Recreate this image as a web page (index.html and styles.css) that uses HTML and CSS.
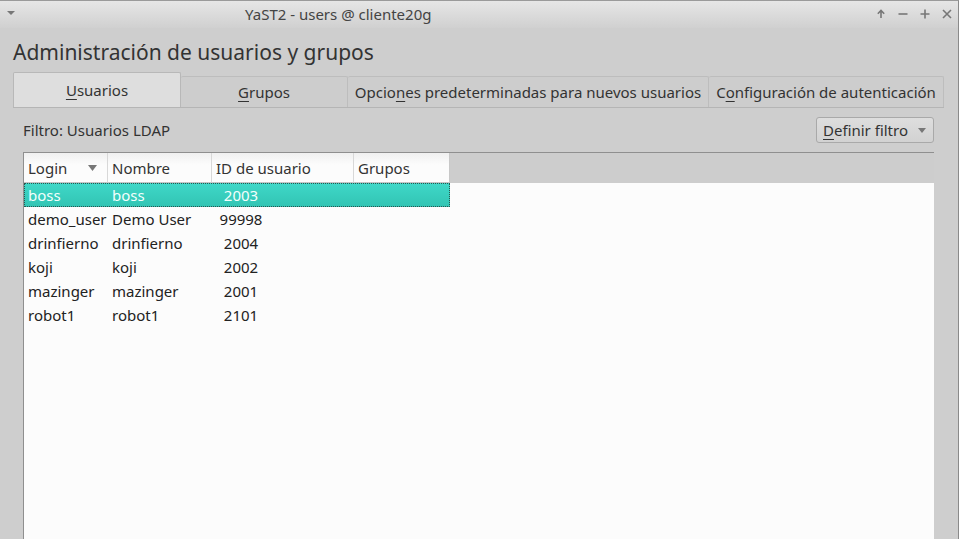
FILE: index.html
```html
<!DOCTYPE html>
<html lang="es">
<head>
<meta charset="utf-8">
<title>YaST2 - users @ cliente20g</title>
<link rel="stylesheet" href="styles.css">
</head>
<body>
<div class="window">
  <div class="titlebar">
    <svg class="menu-arrow" width="8" height="6" viewBox="0 0 8 6"><path d="M0 1 L8 1 L4 5 Z" fill="#777"/></svg>
    <div class="wtitle">YaST2 - users @ cliente20g</div>
    <div class="wbuttons">
      <svg width="10" height="10" viewBox="0 0 10 10"><path d="M5 1.5 L5 9 M1.8 4.7 L5 1.5 L8.2 4.7" stroke="#777" stroke-width="1.6" fill="none"/></svg>
      <svg width="10" height="10" viewBox="0 0 10 10"><path d="M0.5 5 L9.5 5" stroke="#777" stroke-width="1.6"/></svg>
      <svg width="10" height="10" viewBox="0 0 10 10"><path d="M0.5 5 L9.5 5 M5 0.5 L5 9.5" stroke="#777" stroke-width="1.6"/></svg>
      <svg width="10" height="10" viewBox="0 0 10 10"><path d="M1 1 L9 9 M9 1 L1 9" stroke="#777" stroke-width="1.6"/></svg>
    </div>
  </div>
  <div class="content">
    <h1 class="heading">Administración de usuarios y grupos</h1>
    <div class="tabs">
      <div class="tab active w1"><span class="u">U</span>suarios</div>
      <div class="tab w2"><span class="u">G</span>rupos</div>
      <div class="tab w3">Opcio<span class="u">n</span>es predeterminadas para nuevos usuarios</div>
      <div class="tab w4">C<span class="u">o</span>nfiguración de autenticación</div>
    </div>
    <div class="panel">
      <div class="filter-row">
        <div class="filter-label">Filtro: Usuarios LDAP</div>
        <div class="btn"><span class="u">D</span>efinir filtro <svg class="btn-arrow" width="8" height="5" viewBox="0 0 8 5"><path d="M0 0 L8 0 L4 5 Z" fill="#777"/></svg></div>
      </div>
      <div class="table">
        <div class="thead">
          <div class="th c1">Login <svg class="sort" width="9" height="6" viewBox="0 0 9 6"><path d="M0 0 L9 0 L4.5 6 Z" fill="#777"/></svg></div>
          <div class="th c2">Nombre</div>
          <div class="th c3">ID de usuario</div>
          <div class="th c4">Grupos</div>
        </div>
        <div class="tbody">
          <div class="tr selected"><div class="td c1">boss</div><div class="td c2">boss</div><div class="td c3"><span class="num">2003</span></div><div class="td c4"></div></div>
          <div class="tr"><div class="td c1">demo_user</div><div class="td c2">Demo User</div><div class="td c3"><span class="num">99998</span></div><div class="td c4"></div></div>
          <div class="tr"><div class="td c1">drinfierno</div><div class="td c2">drinfierno</div><div class="td c3"><span class="num">2004</span></div><div class="td c4"></div></div>
          <div class="tr"><div class="td c1">koji</div><div class="td c2">koji</div><div class="td c3"><span class="num">2002</span></div><div class="td c4"></div></div>
          <div class="tr"><div class="td c1">mazinger</div><div class="td c2">mazinger</div><div class="td c3"><span class="num">2001</span></div><div class="td c4"></div></div>
          <div class="tr"><div class="td c1">robot1</div><div class="td c2">robot1</div><div class="td c3"><span class="num">2101</span></div><div class="td c4"></div></div>
        </div>
      </div>
    </div>
  </div>
</div>
</body>
</html>
```
FILE: styles.css
```css
html, body {
  margin: 0;
  padding: 0;
}
body {
  width: 959px;
  height: 539px;
  overflow: hidden;
  background: #cecece;
  font-family: "Noto Sans", "Open Sans", sans-serif;
  color: #333;
}
.window {
  height: 539px;
  box-sizing: border-box;
  border-top: 1px solid #9a9a9a;
  border-right: 1px solid #8a8a8a;
  display: flex;
  flex-direction: column;
}
.titlebar {
  height: 27px;
  flex: none;
  display: flex;
  align-items: center;
  background: linear-gradient(#e6e6e6, #d0d0d0);
}
.menu-arrow {
  margin-left: 7px;
  margin-top: -3px;
}
.wtitle {
  margin-left: 230px;
  font-size: 15px;
  color: #444;
  margin-top: -1px;
}
.wbuttons {
  margin-left: auto;
  display: flex;
  gap: 12px;
  margin-right: 6px;
  margin-top: -2px;
}
.content {
  flex: 1;
  display: flex;
  flex-direction: column;
  padding: 0 14px 0 13px;
  min-height: 0;
}
.heading {
  margin: 7px 0 0 0;
  font-size: 21px;
  font-weight: normal;
  color: #333;
  line-height: 34px;
  height: 36px;
}
.tabs {
  display: flex;
  align-items: flex-end;
  height: 36px;
  margin-top: 1px;
  box-sizing: border-box;
  border-bottom: 1px solid #b5b5b5;
}
.tab {
  height: 31px;
  box-sizing: border-box;
  display: flex;
  align-items: center;
  justify-content: center;
  font-size: 15px;
  color: #333;
  background: #cdcdcd;
  border: 1px solid #bdbdbd;
  border-bottom: none;
  border-left: none;
  border-radius: 2px 2px 0 0;
}
.tab.active {
  height: 35px;
  background: #dedede;
  border: 1px solid #b8b8b8;
  border-bottom: none;
  padding-bottom: 0;
}
.w1 { width: 168px; }
.w2 { width: 167px; }
.w3 { width: 361px; }
.w4 { width: 235px; }
.u {
  text-decoration: underline;
  text-underline-offset: 3px;
}
.panel {
  flex: 1;
  display: flex;
  flex-direction: column;
  padding: 0 10px 0 10px;
  min-height: 0;
}
.filter-row {
  display: flex;
  align-items: center;
  justify-content: space-between;
  height: 44px;
}
.filter-label {
  font-size: 15px;
  color: #333;
}
.btn {
  width: 118px;
  height: 26px;
  box-sizing: border-box;
  border: 1px solid #a9a9a9;
  border-radius: 3px;
  background: linear-gradient(#dedede, #d2d2d2);
  display: flex;
  align-items: center;
  padding-left: 6px;
  font-size: 15px;
  color: #333;
}
.btn-arrow {
  margin-left: 10px;
}
.table {
  flex: 1;
  background: #fcfcfc;
  border-top: 1px solid #8f8f8f;
  border-left: 1px solid #8f8f8f;
}
.thead {
  display: flex;
  height: 30px;
  background: #cdcdcd;
}
.th {
  height: 30px;
  box-sizing: border-box;
  background: linear-gradient(#f0f0f0, #fcfcfc 40%, #fcfcfc);
  border-right: 1px solid #d8d8d8;
  display: flex;
  align-items: center;
  padding-left: 4px;
  font-size: 15px;
  color: #333;
  border-bottom: 1px solid #c4c4c4;
}
.th.c4 { border-right: 1px solid #c8c8c8; }
.c1 { width: 84px; }
.c2 { width: 104px; }
.c3 { width: 142px; }
.c4 { width: 96px; }
.sort {
  margin-left: auto;
  margin-right: 10px;
}
.tr {
  display: flex;
  height: 24px;
  align-items: center;
  font-size: 15px;
  color: #222;
}
.td {
  box-sizing: border-box;
  padding-left: 4px;
  white-space: nowrap;
  overflow: hidden;
}
.td.c3 {
  padding-left: 0;
}
.num {
  display: inline-block;
  width: 58px;
  text-align: center;
}
.tr.selected {
  width: 426px;
  background: linear-gradient(#3fd8c8, #32c4b3);
  color: #f4fffd;
  outline: 1px dotted #2a5550;
  outline-offset: -1px;
}
```
